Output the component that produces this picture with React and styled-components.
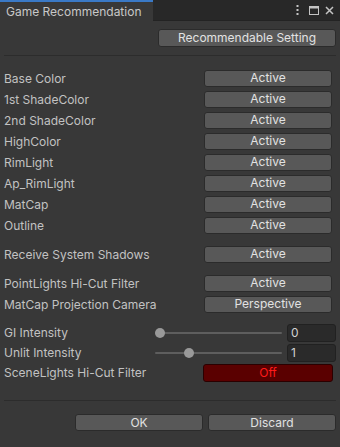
import React from 'react';
import styled, { createGlobalStyle } from 'styled-components';

const Global = createGlobalStyle`
  html, body {
    margin: 0;
    padding: 0;
    background: #383838;
  }
  body {
    font-family: Inter, "Noto Sans", "Liberation Sans", sans-serif;
    font-size: 12px;
    color: #c4c4c4;
    -webkit-font-smoothing: antialiased;
  }
`;

const Window = styled.div`
  width: 340px;
  height: 447px;
  display: flex;
  flex-direction: column;
  background: #383838;
  overflow: hidden;
`;

const TabBar = styled.div`
  height: 21px;
  display: flex;
  background: #282828;
  box-sizing: border-box;
`;

const Tab = styled.div`
  width: 153px;
  height: 21px;
  box-sizing: border-box;
  border-top: 2px solid #3a79c6;
  background: #383838;
  padding-left: 6px;
  display: flex;
  align-items: center;
  color: #c8c8c8;
  font-size: 12px;
`;

const TabFill = styled.div`
  flex: 1;
  display: flex;
  align-items: center;
  justify-content: flex-end;
  padding-right: 6px;
  border-bottom: 1px solid #232323;
  box-sizing: border-box;
`;

const IconSlot = styled.span`
  display: flex;
  margin-left: ${p => p.$gap || 0}px;
`;

const Body = styled.div`
  flex: 1;
  display: flex;
  flex-direction: column;
  padding: 8px 4px 0 4px;
`;

const TopRow = styled.div`
  display: flex;
  justify-content: flex-end;
`;

const Button = styled.button`
  width: ${p => p.$w || 128}px;
  height: ${p => p.$h || 17}px;
  margin: 0;
  padding: 0;
  box-sizing: border-box;
  border: 1px solid ${p => (p.$off ? '#2a0000' : '#2b2b2b')};
  border-radius: 3px;
  background: ${p => (p.$off ? '#5a0000' : '#585858')};
  color: ${p => (p.$off ? '#ff1a1a' : '#e2e2e2')};
  font-family: Inter, "Noto Sans", "Liberation Sans", sans-serif;
  font-size: 12px;
  line-height: 1;
  display: flex;
  align-items: center;
  justify-content: center;
`;

const Separator = styled.div`
  height: 1px;
  background: #2c2c2c;
  margin: ${p => p.$m || '8px 0 11px 0'};
`;

const Group = styled.div`
  display: flex;
  flex-direction: column;
  margin-bottom: 8px;
`;

const Row = styled.div`
  height: ${p => p.$h || 21}px;
  display: flex;
  align-items: center;
  justify-content: space-between;
  padding-top: 1px;
  box-sizing: border-box;
`;

const Label = styled.span`
  color: #c2c2c2;
  white-space: nowrap;
`;

const Control = styled.div`
  margin-right: ${p => p.$r ?? 4}px;
`;

const SliderBox = styled.div`
  display: flex;
  align-items: center;
  gap: 5px;
`;

const Track = styled.div`
  position: relative;
  width: 127px;
  height: 2px;
  background: #5e5e5e;
  border-radius: 1px;
`;

const Thumb = styled.div`
  position: absolute;
  top: -4px;
  width: 10px;
  height: 10px;
  margin-left: -5px;
  border-radius: 50%;
  background: #999999;
`;

const NumberField = styled.div`
  width: 49px;
  height: 18px;
  box-sizing: border-box;
  background: #2a2a2a;
  border: 1px solid #212121;
  border-radius: 3px;
  padding-left: 3px;
  display: flex;
  align-items: center;
  color: #d2d2d2;
`;

const Footer = styled.div`
  display: flex;
  justify-content: flex-end;
  gap: 5px;
`;

const features = [
  'Base Color',
  '1st ShadeColor',
  '2nd ShadeColor',
  'HighColor',
  'RimLight',
  'Ap_RimLight',
  'MatCap',
  'Outline',
];

function Slider({ value, min, max }) {
  const pct = ((value - min) / (max - min)) * 100;
  return (
    <SliderBox>
      <Track>
        <Thumb style={{ left: `calc(5px + ${pct} * 1.17px)` }} />
      </Track>
      <NumberField>{value}</NumberField>
    </SliderBox>
  );
}

function HeaderIcons() {
  return (
    <>
      <IconSlot>
        <svg width="3" height="10" viewBox="0 0 3 10">
          <rect x="0.5" y="0" width="2" height="2" fill="#c4c4c4" />
          <rect x="0.5" y="4" width="2" height="2" fill="#c4c4c4" />
          <rect x="0.5" y="8" width="2" height="2" fill="#c4c4c4" />
        </svg>
      </IconSlot>
      <IconSlot $gap={10}>
        <svg width="10" height="9" viewBox="0 0 10 9">
          <rect x="0.5" y="0.5" width="9" height="8" fill="none" stroke="#c4c4c4" />
          <rect x="0.5" y="0.5" width="9" height="2" fill="#c4c4c4" />
        </svg>
      </IconSlot>
      <IconSlot $gap={6}>
        <svg width="9" height="9" viewBox="0 0 9 9">
          <path d="M1 1 L8 8 M8 1 L1 8" stroke="#c4c4c4" strokeWidth="1.5" />
        </svg>
      </IconSlot>
    </>
  );
}

export default function App() {
  return (
    <Window>
      <Global />
      <TabBar>
        <Tab>Game Recommendation</Tab>
        <TabFill>
          <HeaderIcons />
        </TabFill>
      </TabBar>
      <Body>
        <TopRow>
          <Button $w={178} $h={18}>Recommendable Setting</Button>
        </TopRow>
        <Separator />
        <Group>
          {features.map(f => (
            <Row key={f}>
              <Label>{f}</Label>
              <Control><Button>Active</Button></Control>
            </Row>
          ))}
        </Group>
        <Group>
          <Row>
            <Label>Receive System Shadows</Label>
            <Control><Button>Active</Button></Control>
          </Row>
        </Group>
        <Group>
          <Row>
            <Label>PointLights Hi-Cut Filter</Label>
            <Control><Button>Active</Button></Control>
          </Row>
          <Row>
            <Label>MatCap Projection Camera</Label>
            <Control><Button>Perspective</Button></Control>
          </Row>
        </Group>
        <Group>
          <Row $h={20}>
            <Label>GI Intensity</Label>
            <Control $r={0}><Slider value={0} min={0} max={4} /></Control>
          </Row>
          <Row $h={20}>
            <Label>Unlit Intensity</Label>
            <Control $r={0}><Slider value={1} min={0} max={4} /></Control>
          </Row>
          <Row $h={20}>
            <Label>SceneLights Hi-Cut Filter</Label>
            <Control $r={3}>
              <Button $off $w={130} $h={18}>Off</Button>
            </Control>
          </Row>
        </Group>
        <Separator $m="10px 0 13px 0" />
        <Footer>
          <Button>OK</Button>
          <Button>Discard</Button>
        </Footer>
      </Body>
    </Window>
  );
}
